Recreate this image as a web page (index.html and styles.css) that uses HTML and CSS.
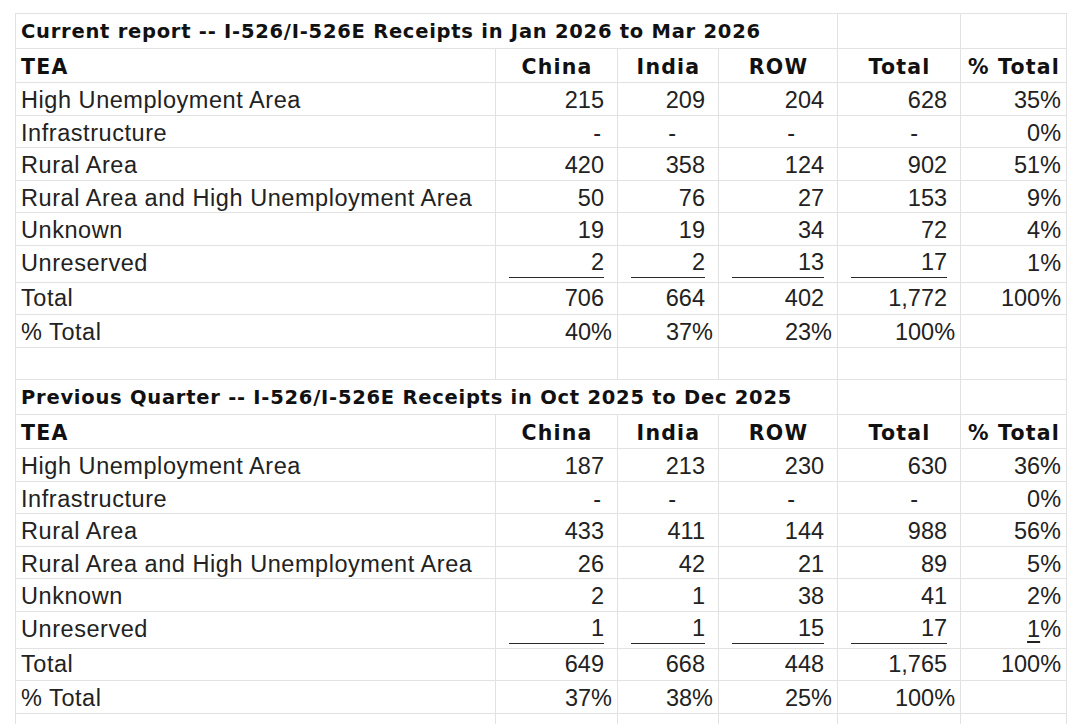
FILE: index.html
```html
<!DOCTYPE html>
<html lang="en">
<head>
<meta charset="utf-8">
<title>I-526/I-526E Receipts by TEA</title>
<link rel="stylesheet" href="styles.css">
</head>
<body>
<div class="sheet">
<table class="grid">
  <colgroup>
    <col class="c-label"><col class="c-china"><col class="c-india"><col class="c-row"><col class="c-total"><col class="c-pct">
  </colgroup>
  <tbody>
    <tr class="r-title"><td colspan="4" class="title">Current report -- I-526/I-526E Receipts in Jan 2026 to Mar 2026</td><td></td><td></td></tr>
    <tr class="r-head"><td class="head-l">TEA</td><td class="head">China</td><td class="head">India</td><td class="head">ROW</td><td class="head">Total</td><td class="head">% Total</td></tr>
    <tr class="r-a"><td class="lbl">High Unemployment Area</td><td class="num">215</td><td class="num">209</td><td class="num">204</td><td class="num">628</td><td class="pct">35%</td></tr>
    <tr class="r-b"><td class="lbl">Infrastructure</td><td class="num dash first">-</td><td class="num dash">-</td><td class="num dash">-</td><td class="num dash">-</td><td class="pct">0%</td></tr>
    <tr class="r-a"><td class="lbl">Rural Area</td><td class="num">420</td><td class="num">358</td><td class="num">124</td><td class="num">902</td><td class="pct">51%</td></tr>
    <tr class="r-b"><td class="lbl">Rural Area and High Unemployment Area</td><td class="num">50</td><td class="num">76</td><td class="num">27</td><td class="num">153</td><td class="pct">9%</td></tr>
    <tr class="r-a"><td class="lbl">Unknown</td><td class="num">19</td><td class="num">19</td><td class="num">34</td><td class="num">72</td><td class="pct">4%</td></tr>
    <tr class="r-u"><td class="lbl">Unreserved</td><td class="num ul"><span class="acct">2</span></td><td class="num ul"><span class="acct">2</span></td><td class="num ul"><span class="acct">13</span></td><td class="num ul"><span class="acct">17</span></td><td class="pct">1%</td></tr>
    <tr class="r-t"><td class="lbl">Total</td><td class="num">706</td><td class="num">664</td><td class="num">402</td><td class="num">1,772</td><td class="pct">100%</td></tr>
    <tr class="r-p"><td class="lbl">% Total</td><td class="pct">40%</td><td class="pct">37%</td><td class="pct">23%</td><td class="pct">100%</td><td></td></tr>
    <tr class="r-e"><td></td><td></td><td></td><td></td><td></td><td></td></tr>

    <tr class="r-title"><td colspan="4" class="title">Previous Quarter -- I-526/I-526E Receipts in Oct 2025 to Dec 2025</td><td></td><td></td></tr>
    <tr class="r-head"><td class="head-l">TEA</td><td class="head">China</td><td class="head">India</td><td class="head">ROW</td><td class="head">Total</td><td class="head">% Total</td></tr>
    <tr class="r-a"><td class="lbl">High Unemployment Area</td><td class="num">187</td><td class="num">213</td><td class="num">230</td><td class="num">630</td><td class="pct">36%</td></tr>
    <tr class="r-b"><td class="lbl">Infrastructure</td><td class="num dash first">-</td><td class="num dash">-</td><td class="num dash">-</td><td class="num dash">-</td><td class="pct">0%</td></tr>
    <tr class="r-a"><td class="lbl">Rural Area</td><td class="num">433</td><td class="num">411</td><td class="num">144</td><td class="num">988</td><td class="pct">56%</td></tr>
    <tr class="r-b"><td class="lbl">Rural Area and High Unemployment Area</td><td class="num">26</td><td class="num">42</td><td class="num">21</td><td class="num">89</td><td class="pct">5%</td></tr>
    <tr class="r-a"><td class="lbl">Unknown</td><td class="num">2</td><td class="num">1</td><td class="num">38</td><td class="num">41</td><td class="pct">2%</td></tr>
    <tr class="r-u"><td class="lbl">Unreserved</td><td class="num ul"><span class="acct">1</span></td><td class="num ul"><span class="acct">1</span></td><td class="num ul"><span class="acct">15</span></td><td class="num ul"><span class="acct">17</span></td><td class="pct"><span class="u1">1</span>%</td></tr>
    <tr class="r-t"><td class="lbl">Total</td><td class="num">649</td><td class="num">668</td><td class="num">448</td><td class="num">1,765</td><td class="pct">100%</td></tr>
    <tr class="r-p"><td class="lbl">% Total</td><td class="pct">37%</td><td class="pct">38%</td><td class="pct">25%</td><td class="pct">100%</td><td></td></tr>
    <tr class="r-e"><td></td><td></td><td></td><td></td><td></td><td></td></tr>
  </tbody>
</table>
</div>
</body>
</html>
```

FILE: styles.css
```css
html, body {
  margin: 0;
  padding: 0;
  background: #ffffff;
}

body {
  font-family: "Liberation Sans", Arial, sans-serif;
  color: #222222;
  overflow: hidden;
}

.sheet {
  padding: 13px 0 0 15px;
}

.grid {
  border-collapse: collapse;
  table-layout: fixed;
  width: 1052px;
}

.grid td {
  border: 1px solid #e2e2e2;
  padding: 0;
  white-space: nowrap;
  overflow: visible;
  font-size: 23.5px;
  line-height: 1;
  vertical-align: middle;
}

.c-label { width: 480px; }
.c-china { width: 122px; }
.c-india { width: 101px; }
.c-row { width: 119px; }
.c-total { width: 123px; }
.c-pct { width: 106px; }

.r-title { height: 35px; }
.r-head { height: 34px; }
.r-a { height: 33px; }
.r-b { height: 32px; }
.r-u { height: 37px; }
.r-t { height: 32px; }
.r-p { height: 33px; }
.r-e { height: 32px; }

.r-a td,
.r-b td,
.r-p td {
  padding-top: 4px;
}

.r-title td {
  padding-top: 2px;
}

.r-head td {
  padding-top: 4px;
}

.title {
  font-family: "DejaVu Sans", Verdana, sans-serif;
  font-weight: bold;
  font-size: 19.5px !important;
  letter-spacing: 0.75px;
  padding-left: 5px !important;
  color: #111;
}

.head-l,
.head {
  font-family: "DejaVu Sans", Verdana, sans-serif;
  font-weight: bold;
  font-size: 20.5px !important;
  letter-spacing: 1.2px;
  color: #111;
}

.head-l {
  padding-left: 5px !important;
}

.head {
  text-align: center;
  padding-left: 1px !important;
}

.lbl {
  padding-left: 5px !important;
  letter-spacing: 0.55px;
}

.num {
  text-align: right;
  padding-right: 13px !important;
}

.num.dash {
  padding-right: 42px !important;
}

.num.dash.first {
  padding-right: 16px !important;
}

.pct {
  text-align: right;
  padding-right: 5px !important;
}

.num.ul {
  padding-left: 13px !important;
  vertical-align: bottom;
}

.acct {
  display: block;
  border-bottom: 1.5px solid #2a2a2a;
  padding-bottom: 3px;
  margin-bottom: 4px;
}

.u1 {
  text-decoration: underline;
  text-decoration-thickness: 1.5px;
  text-underline-offset: 4px;
}
```
